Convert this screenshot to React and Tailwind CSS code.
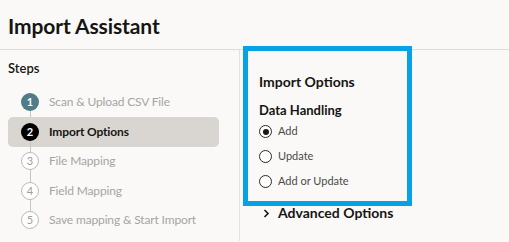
import * as React from "react";

const STEPS = [
  { n: 1, label: "Scan & Upload CSV File", state: "done" },
  { n: 2, label: "Import Options", state: "current" },
  { n: 3, label: "File Mapping", state: "todo" },
  { n: 4, label: "Field Mapping", state: "todo" },
  { n: 5, label: "Save mapping & Start Import", state: "todo" },
];

const OPTIONS = ["Add", "Update", "Add or Update"];

function StepBadge({ n, state }) {
  if (state === "done") {
    return (
      <span className="flex h-[18px] w-[18px] items-center justify-center rounded-full bg-[#4f7c87] text-[11px] font-bold text-white">
        {n}
      </span>
    );
  }
  if (state === "current") {
    return (
      <span className="flex h-[18px] w-[18px] items-center justify-center rounded-full bg-black text-[11px] font-bold text-white">
        {n}
      </span>
    );
  }
  return (
    <span className="flex h-[18px] w-[18px] items-center justify-center rounded-full border border-[#bdb9b5] bg-white text-[11px] text-[#a19d99]">
      {n}
    </span>
  );
}

function Radio({ checked }) {
  return (
    <span className="flex h-[13px] w-[13px] items-center justify-center rounded-full border-[1.5px] border-[#2b2928] bg-white">
      {checked && <span className="h-[6px] w-[6px] rounded-full bg-[#1a1816]" />}
    </span>
  );
}

export default function App() {
  const [choice, setChoice] = React.useState("Add");

  return (
    <div
      className="h-[242px] w-[509px] overflow-hidden bg-[#faf9f8] text-[#161513]"
      style={{ fontFamily: "Lato, 'Open Sans', sans-serif" }}
    >
      <header className="flex h-[50px] items-center border-b border-[#dedbd8] pl-[8px] pt-[2px]">
        <h1 className="text-[21px] font-bold tracking-[-0.1px]">Import Assistant</h1>
      </header>

      <div className="flex">
        {/* steps rail */}
        <div className="h-[191px] w-[240px] shrink-0 border-r border-[#e4e1de] pl-[8px] pr-[20px]">
          <div className="pt-[9px] pb-[9px] text-[13px] font-semibold">Steps</div>
          <ol className="flex flex-col">
            {STEPS.map((s, i) => (
              <li
                key={s.n}
                className={`relative flex h-[29.5px] items-center gap-[10px] rounded-[5px] pl-[13px] ${
                  s.state === "current" ? "bg-[#d9d6d2]" : ""
                }`}
              >
                {i < STEPS.length - 1 && (
                  <span className="absolute left-[21.5px] top-[20px] h-[20px] w-px bg-[#c9c5c1]" />
                )}
                <span className="relative z-10">
                  <StepBadge n={s.n} state={s.state} />
                </span>
                <span
                  className={`text-[12px] tracking-[-0.15px] ${
                    s.state === "current" ? "font-bold text-[#161513]" : "text-[#a8a4a0]"
                  }`}
                >
                  {s.label}
                </span>
              </li>
            ))}
          </ol>
        </div>

        {/* content */}
        <div className="flex flex-col pl-[3px]">
          <section className="-mt-[4px] w-[169px] border-[5px] border-[#05a3e5] pl-[11px] pt-[21px] pb-[7px]">
            <h2 className="text-[14px] font-bold leading-[20px]">Import Options</h2>
            <h3 className="mt-[9px] text-[13px] font-bold leading-[18px]">Data Handling</h3>
            <div className="flex flex-col">
              {OPTIONS.map((o) => (
                <label
                  key={o}
                  className="flex h-[25px] cursor-pointer items-center gap-[6px]"
                  onClick={() => setChoice(o)}
                >
                  <Radio checked={choice === o} />
                  <span className="text-[11px] text-[#4d4a47]">{o}</span>
                </label>
              ))}
            </div>
          </section>
          <button className="-mt-[1px] flex items-center gap-[8px] pl-[20px] text-[14px] font-bold leading-[16px]">
            <svg width="7" height="9" viewBox="0 0 7 9" fill="none">
              <path d="M1.5 1 L5 4.5 L1.5 8" stroke="#161513" strokeWidth="1.6" />
            </svg>
            Advanced Options
          </button>
        </div>
      </div>
    </div>
  );
}
